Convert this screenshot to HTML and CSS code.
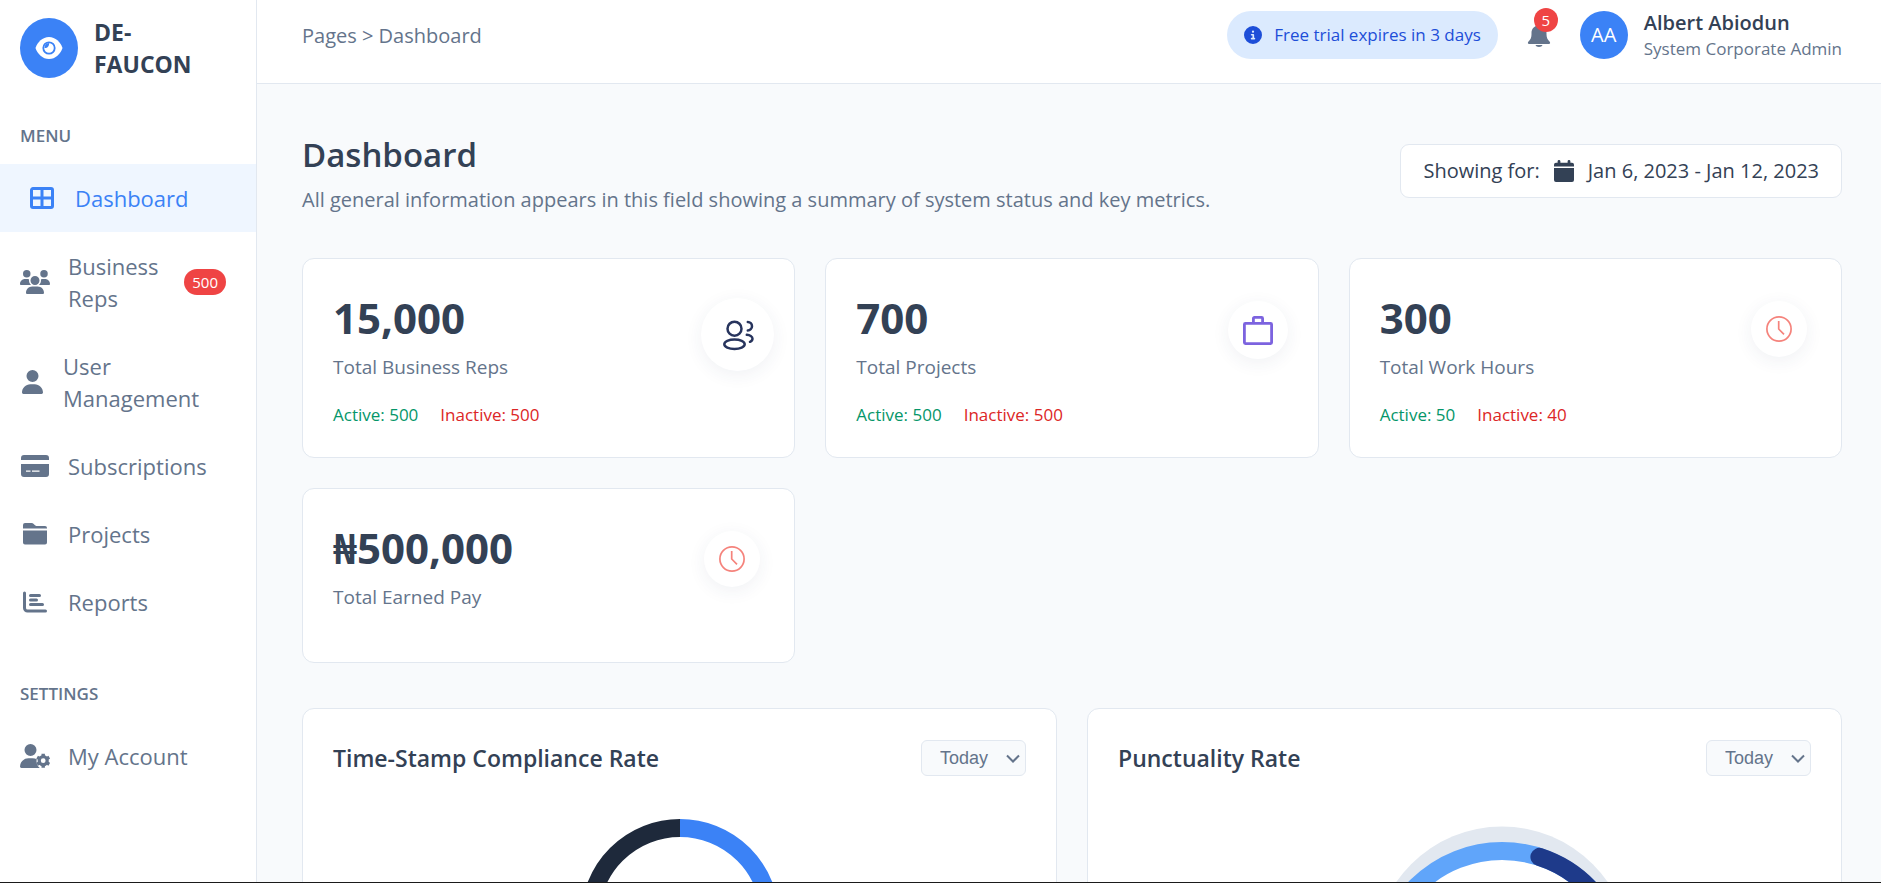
FILE: index.html
```html
<!DOCTYPE html>
<html lang="en">
<head>
<meta charset="utf-8">
<title>De-Faucon Dashboard</title>
<link rel="stylesheet" href="styles.css">
</head>
<body>
<div class="app">
  <aside class="sidebar">
    <div class="brand">
      <span class="brand-mark">
        <svg width="28" height="24" viewBox="0 0 28 24" aria-hidden="true">
          <path fill="#fff" d="M14 1C7.500 1 2.500 6 .5 12c2 6 7 11 13.500 11s11.500-5 13.500-11C25.500 6 20.500 1 14 1z"/>
          <circle cx="14" cy="12" r="5.700" fill="#fff" stroke="#3b82f6" stroke-width="1.800"/>
          <path fill="#3b82f6" d="M9.500 12a5 5 0 0 1 4.500-5c.5 3-1.500 5.200-4.500 5z"/>
        </svg>
      </span>
      <span class="brand-name">DE-FAUCON</span>
    </div>

    <nav class="menu" aria-label="Main">
      <h2 class="menu-title">MENU</h2>
      <a class="item item-active" href="#dashboard">
        <svg class="icon" width="24" height="22" viewBox="0 0 24 22" aria-hidden="true"><path fill="none" stroke="currentColor" stroke-width="3" stroke-linejoin="round" d="M3 1.500h18a1.500 1.500 0 0 1 1.500 1.500v16a1.500 1.500 0 0 1-1.500 1.500H3A1.500 1.500 0 0 1 1.500 19V3A1.500 1.500 0 0 1 3 1.500zM12 2v18M2 11h20"/></svg>
        <span>Dashboard</span>
      </a>
      <a class="item" href="#reps">
        <svg class="icon" width="30" height="24" viewBox="0 0 640 512" fill="currentColor" aria-hidden="true"><path d="M144 0a80 80 0 1 1 0 160A80 80 0 1 1 144 0zM512 0a80 80 0 1 1 0 160A80 80 0 1 1 512 0zM0 298.700C0 239.800 47.800 192 106.700 192h42.700c15.900 0 31 3.500 44.600 9.700-1.300 7.200-1.900 14.700-1.900 22.300 0 38.200 16.800 72.500 43.300 96H21.300C9.600 320 0 310.400 0 298.700zM405.300 320h-.7c26.600-23.500 43.300-57.800 43.300-96 0-7.600-.7-15-1.900-22.300 13.600-6.300 28.700-9.700 44.600-9.700h42.700C592.200 192 640 239.800 640 298.700c0 11.800-9.600 21.300-21.300 21.300H405.300zM224 224a96 96 0 1 1 192 0 96 96 0 1 1-192 0zM128 485.300C128 411.700 187.700 352 261.300 352h117.400C452.300 352 512 411.700 512 485.300c0 14.700-11.900 26.700-26.700 26.700H154.700c-14.700 0-26.700-11.900-26.700-26.700z"/></svg>
        <span>Business Reps</span>
        <span class="count">500</span>
      </a>
      <a class="item" href="#users">
        <svg class="icon icon-user" width="21" height="24" viewBox="0 0 448 512" fill="currentColor" aria-hidden="true"><path d="M224 256A128 128 0 1 0 224 0a128 128 0 1 0 0 256zm-45.700 48C79.800 304 0 383.800 0 482.300 0 498.700 13.300 512 29.700 512h388.600c16.400 0 29.700-13.300 29.700-29.700C448 383.800 368.200 304 269.700 304h-91.400z"/></svg>
        <span>User Management</span>
      </a>
      <a class="item" href="#subscriptions">
        <svg class="icon" width="28" height="22" viewBox="0 0 28 22" aria-hidden="true"><path fill="currentColor" d="M3 0h22a3 3 0 0 1 3 3v2H0V3a3 3 0 0 1 3-3zM0 9h28v10a3 3 0 0 1-3 3H3a3 3 0 0 1-3-3z"/><path stroke="#fff" stroke-width="1.300" d="M5 16.200h4.500M11 16.200h7.500"/></svg>
        <span>Subscriptions</span>
      </a>
      <a class="item" href="#projects">
        <svg class="icon" width="24" height="22" viewBox="0 0 24 22" fill="currentColor" aria-hidden="true"><path d="M0 5.500V2a2 2 0 0 1 2-2h6.500c1 0 1.600.4 2.200 1l1.300 1.200c.5.500 1 .8 2 .8h8a2 2 0 0 1 2 2v.5zM0 7.500h24V19.500a2 2 0 0 1-2 2H2a2 2 0 0 1-2-2z"/></svg>
        <span>Projects</span>
      </a>
      <a class="item" href="#reports">
        <svg class="icon" width="24" height="22" viewBox="0 0 24 22" fill="none" stroke="currentColor" stroke-width="3" stroke-linecap="round" aria-hidden="true"><path d="M1.500 2v15a3 3 0 0 0 3 3h18M7.500 4.500h9M7.500 9h6M7.500 13.500h12"/></svg>
        <span>Reports</span>
      </a>
    </nav>

    <nav class="menu" aria-label="Settings">
      <h2 class="menu-title">SETTINGS</h2>
      <a class="item" href="#account">
        <svg class="icon" width="30" height="24" viewBox="0 0 30 24" aria-hidden="true"><path fill="currentColor" d="M10.500 0a6 6 0 1 1 0 12 6 6 0 0 1 0-12zM8.400 14.200h4.200c1.600 0 3 .4 4.200 1.100-.8 2.700.2 6.700 3 8.700H1.400A1.400 1.400 0 0 1 0 22.600a8.400 8.400 0 0 1 8.400-8.400z"/><circle cx="23.200" cy="16.700" r="4" fill="none" stroke="currentColor" stroke-width="3.200"/><path stroke="currentColor" stroke-width="3.400" d="M23.200 9.700v2.600M23.200 21.100v2.600M17.100 13.200l2.300 1.300M27 18.900l2.300 1.300M17.100 20.200l2.300-1.300M27 14.500l2.300-1.300"/></svg>
        <span>My Account</span>
      </a>
    </nav>
  </aside>

  <div class="page">
    <header class="topbar">
      <nav class="crumbs" aria-label="Breadcrumb">Pages &gt; Dashboard</nav>
      <div class="trial">
        <svg width="18" height="18" viewBox="0 0 512 512" fill="currentColor" aria-hidden="true"><path d="M256 512A256 256 0 1 0 256 0a256 256 0 1 0 0 512zM216 336h24v-64h-24c-13.300 0-24-10.700-24-24s10.700-24 24-24h48c13.300 0 24 10.700 24 24v88h8c13.300 0 24 10.700 24 24s-10.700 24-24 24h-80c-13.300 0-24-10.700-24-24s10.700-24 24-24zm40-208a32 32 0 1 1 0 64 32 32 0 1 1 0-64z"/></svg>
        <span>Free trial expires in 3 days</span>
      </div>
      <button class="bell" type="button" aria-label="Notifications">
        <svg width="24" height="24" viewBox="0 0 24 24" fill="currentColor" aria-hidden="true"><path d="M12 0c.9 0 1.500.7 1.500 1.500v1C17 3.200 19.500 6 19.500 10v1.500c0 3 1 5 3 7 1 1 .8 2.500-.7 2.500H2.200C.7 21 .5 19.500 1.500 18.500c2-2 3-4 3-7V10c0-4 2.500-6.800 6-7.500v-1C10.500.7 11.100 0 12 0zM8.500 22h7c-.4 1.200-1.700 2-3.500 2S8.900 23.200 8.500 22z"/></svg>
        <span class="bell-count">5</span>
      </button>
      <div class="profile">
        <span class="avatar">AA</span>
        <div>
          <div class="profile-name">Albert Abiodun</div>
          <div class="profile-role">System Corporate Admin</div>
        </div>
      </div>
    </header>

    <main class="content">
      <div class="heading">
        <div>
          <h1 class="title">Dashboard</h1>
          <p class="subtitle">All general information appears in this field showing a summary of system status and key metrics.</p>
        </div>
        <button class="range" type="button">
          <span>Showing for:</span>
          <svg width="20" height="22" viewBox="0 0 20 22" fill="currentColor" aria-hidden="true"><path d="M5 0c.8 0 1.400.6 1.400 1.400v1.400h7.200V1.400a1.400 1.400 0 0 1 2.800 0v1.400H18a2 2 0 0 1 2 2v1.700H0V4.800a2 2 0 0 1 2-2h1.600V1.400C3.600.6 4.200 0 5 0zM0 8h20v12a2 2 0 0 1-2 2H2a2 2 0 0 1-2-2z"/></svg>
          <span>Jan 6, 2023 - Jan 12, 2023</span>
        </button>
      </div>

      <section class="stats">
        <article class="card stat">
          <div>
            <div class="value">15,000</div>
            <div class="label">Total Business Reps</div>
            <div class="split"><span class="good">Active: 500</span><span class="bad">Inactive: 500</span></div>
          </div>
          <span class="disc disc-large">
            <svg width="36" height="36" viewBox="0 0 36 36" fill="none" stroke="#27345d" stroke-width="2.500" stroke-linecap="round" aria-hidden="true"><circle cx="14.500" cy="11.700" r="7"/><ellipse cx="14.500" cy="27.300" rx="10.200" ry="4.700"/><path d="M27.800 5a4.200 4.200 0 0 1 0 8.400M26.800 17.800c3 .3 5.700 1.900 5.700 4 0 1.400-.9 2.400-2.500 3"/></svg>
          </span>
        </article>
        <article class="card stat">
          <div>
            <div class="value">700</div>
            <div class="label">Total Projects</div>
            <div class="split"><span class="good">Active: 500</span><span class="bad">Inactive: 500</span></div>
          </div>
          <span class="disc disc-medium">
            <svg width="30" height="29" viewBox="0 0 30 29" fill="none" stroke="#7c63df" stroke-width="2.800" stroke-linejoin="round" aria-hidden="true"><rect x="1.400" y="7.400" width="27.200" height="20.200" rx="1"/><path d="M10.400 7V2.400a1 1 0 0 1 1-1h7.200a1 1 0 0 1 1 1V7"/></svg>
          </span>
        </article>
        <article class="card stat">
          <div>
            <div class="value">300</div>
            <div class="label">Total Work Hours</div>
            <div class="split"><span class="good">Active: 50</span><span class="bad">Inactive: 40</span></div>
          </div>
          <span class="disc">
            <svg width="26" height="26" viewBox="0 0 26 26" fill="none" stroke="#f5837c" stroke-width="1.700" aria-hidden="true"><circle cx="13" cy="13" r="12.100"/><path d="M12.700 5v8l5.300 5.300"/></svg>
          </span>
        </article>
        <article class="card stat">
          <div>
            <div class="value">₦500,000</div>
            <div class="label">Total Earned Pay</div>
            <div class="split"></div>
          </div>
          <span class="disc">
            <svg width="26" height="26" viewBox="0 0 26 26" fill="none" stroke="#f5837c" stroke-width="1.700" aria-hidden="true"><circle cx="13" cy="13" r="12.100"/><path d="M12.700 5v8l5.300 5.300"/></svg>
          </span>
        </article>
      </section>

      <section class="charts">
        <article class="card chart">
          <div class="chart-head">
            <h2 class="chart-title" id="compliance">Time-Stamp Compliance Rate</h2>
            <div class="picker">
              <select class="select" aria-labelledby="compliance"><option>Today</option><option>Week</option></select>
              <svg class="chevron" width="14" height="9" viewBox="0 0 14 9" aria-hidden="true"><path fill="none" stroke="#64748b" stroke-width="2" d="M1 1.500l6 6 6-6"/></svg>
            </div>
          </div>
          <svg class="ring" width="224" height="224" viewBox="0 0 224 224" fill="none" stroke-width="18" aria-hidden="true">
            <path stroke="#3b82f6" d="M112 22a90 90 0 0 1 0 180"/>
            <path stroke="#1e293b" d="M112 202a90 90 0 0 1 0-180"/>
          </svg>
        </article>
        <article class="card chart">
          <div class="chart-head">
            <h2 class="chart-title" id="punctuality">Punctuality Rate</h2>
            <div class="picker">
              <select class="select" aria-labelledby="punctuality"><option>Today</option><option>Week</option></select>
              <svg class="chevron" width="14" height="9" viewBox="0 0 14 9" aria-hidden="true"><path fill="none" stroke="#64748b" stroke-width="2" d="M1 1.500l6 6 6-6"/></svg>
            </div>
          </div>
          <svg class="ring" width="334" height="300" viewBox="0 0 334 300" fill="none" stroke-width="18" aria-hidden="true">
            <circle stroke="none" fill="#e2e8f0" cx="204" cy="149" r="128.500"/>
            <circle stroke="#60a5fa" fill="#fff" cx="204" cy="166" r="121"/>
            <path stroke="#1e3a8a" stroke-linecap="round" d="M241.400 50.900a121 121 0 0 1 83.600 115.100"/>
          </svg>
        </article>
      </section>
    </main>
  </div>
</div>
</body>
</html>
```

FILE: styles.css
```css
* {
  box-sizing: border-box;
}

body {
  margin: 0;
  font-family: "Open Sans", "Noto Sans", sans-serif;
  font-size: 18px;
  color: #334155;
  background: #f8fafc;
}

h1,
h2,
p {
  margin: 0;
}

svg {
  display: block;
  flex-shrink: 0;
}

button {
  font: inherit;
  color: inherit;
  cursor: pointer;
}

.app {
  display: flex;
  height: 100vh;
  overflow: hidden;
  border-bottom: 1px solid #1a1a1a;
}

/* Sidebar */

.sidebar {
  flex: 0 0 257px;
  background: #fff;
  border-right: 1px solid #e2e8f0;
  padding-top: 16px;
}

.brand {
  display: flex;
  align-items: center;
  gap: 16px;
  padding: 0 45px 0 20px;
  margin-bottom: 40px;
}

.brand-mark {
  display: flex;
  align-items: center;
  justify-content: center;
  flex: 0 0 58px;
  height: 60px;
  border-radius: 50%;
  background: #3b82f6;
}

.brand-name {
  font-size: 23px;
  line-height: 32px;
  font-weight: 700;
}

.menu {
  margin-bottom: 42px;
}

.menu-title {
  padding: 0 20px;
  margin-bottom: 12px;
  font-size: 17px;
  line-height: 32px;
  font-weight: 600;
  color: #64748b;
}

.item {
  display: flex;
  align-items: center;
  gap: 18px;
  padding: 18px 30px 18px 20px;
  font-size: 22px;
  line-height: 32px;
  color: #64748b;
  text-decoration: none;
}

.item .icon {
  width: 30px;
}

.item .icon-user {
  width: 25px;
}

.item-active {
  padding-left: 27px;
  color: #3b82f6;
  background: #eff6ff;
}

.count {
  margin-left: auto;
  padding: 0 8px;
  border-radius: 13px;
  font-size: 15px;
  line-height: 26px;
  color: #fff;
  background: #ef4444;
}

/* Top bar */

.page {
  flex: 1;
  min-width: 0;
}

.topbar {
  display: flex;
  align-items: center;
  padding: 9px 39px 22px 45px;
  background: #fff;
  border-bottom: 1px solid #e2e8f0;
}

.crumbs {
  margin-right: auto;
  font-size: 20px;
  color: #64748b;
}

.trial {
  display: flex;
  align-items: center;
  gap: 12px;
  padding: 0 17px;
  border-radius: 24px;
  font-size: 17px;
  line-height: 48px;
  color: #1d4ed8;
  background: #dbeafe;
}

.bell {
  position: relative;
  margin: 0 29px;
  padding: 0;
  border: 0;
  background: none;
  color: #64748b;
}

.bell-count {
  position: absolute;
  top: -15px;
  right: -7px;
  width: 24px;
  border-radius: 50%;
  font-size: 15px;
  line-height: 24px;
  text-align: center;
  color: #fff;
  background: #ef4444;
}

.profile {
  display: flex;
  align-items: center;
  gap: 16px;
}

.avatar {
  width: 48px;
  border-radius: 50%;
  font-size: 20px;
  line-height: 48px;
  text-align: center;
  color: #fff;
  background: #3b82f6;
}

.profile-name {
  font-size: 20px;
  line-height: 28px;
  font-weight: 600;
}

.profile-role {
  font-size: 17px;
  line-height: 24px;
  color: #64748b;
}

/* Content */

.content {
  padding: 46px 39px 46px 45px;
}

.heading {
  display: flex;
  align-items: flex-start;
  justify-content: space-between;
  margin-bottom: 43px;
}

.title {
  margin-bottom: 5px;
  font-size: 33px;
  line-height: 50px;
  font-weight: 600;
}

.subtitle {
  font-size: 20px;
  line-height: 30px;
  color: #64748b;
}

.range {
  display: flex;
  align-items: center;
  gap: 14px;
  margin-top: 14px;
  padding: 0 22px;
  border: 1px solid #e2e8f0;
  border-radius: 9px;
  font-size: 20px;
  line-height: 52px;
  background: #fff;
}

.card {
  padding: 30px;
  border: 1px solid #e2e8f0;
  border-radius: 12px;
  background: #fff;
}

.stats {
  display: grid;
  grid-template-columns: repeat(3, 1fr);
  gap: 30px;
  margin-bottom: 45px;
}

.stat {
  display: flex;
  align-items: flex-start;
  justify-content: space-between;
}

.value {
  font-size: 42px;
  line-height: 58px;
  font-weight: 700;
}

.label {
  margin: 5px 0 20px;
  font-size: 19px;
  line-height: 30px;
  color: #64748b;
}

.split {
  display: flex;
  gap: 22px;
  font-size: 17px;
  line-height: 25px;
}

.good {
  color: #059669;
}

.bad {
  color: #dc2626;
}

.disc {
  display: flex;
  align-items: center;
  justify-content: center;
  width: 56px;
  height: 56px;
  margin: 12px 4px 0 0;
  border-radius: 50%;
  background: #fff;
  box-shadow: 0 4px 18px rgba(39, 52, 93, 0.07);
}

.disc-medium {
  width: 60px;
  height: 58px;
  margin-right: 0;
}

.disc-large {
  width: 73px;
  height: 73px;
  margin: 9px -10px 0 0;
}

.charts {
  display: grid;
  grid-template-columns: repeat(2, 1fr);
  gap: 30px;
}

.chart-head {
  display: flex;
  align-items: center;
  justify-content: space-between;
  margin-bottom: 29px;
}

.chart-title {
  font-size: 23px;
  line-height: 38px;
  font-weight: 600;
}

.picker {
  position: relative;
}

.select {
  appearance: none;
  display: block;
  width: 105px;
  height: 36px;
  padding: 0 18px;
  border: 1px solid #e2e8f0;
  border-radius: 6px;
  font-family: "Liberation Sans", Arial, sans-serif;
  font-size: 18px;
  color: #64748b;
  background: #f8fafc;
}

.chevron {
  position: absolute;
  top: 14px;
  right: 6px;
  pointer-events: none;
}

.ring {
  margin: 0 auto;
}
```
